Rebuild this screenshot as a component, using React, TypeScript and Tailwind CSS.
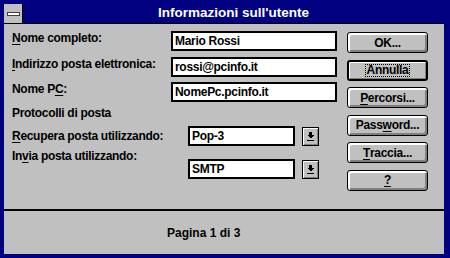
import clsx from 'clsx'
import type { ReactNode } from 'react'

// Mnemonic letter (underlined access key)
const Mn = ({ children }: { children: ReactNode }) => (
  <span className="underline decoration-1 underline-offset-[2px]">{children}</span>
)

const Label = ({ children, className }: { children: ReactNode; className?: string }) => (
  <div className={clsx('shrink-0 text-[12px] leading-[14px] tracking-[-0.3px]', className)}>{children}</div>
)

const TextBox = ({ children, className }: { children: ReactNode; className?: string }) => (
  <div
    className={clsx(
      'flex h-[20px] items-center border-2 border-black bg-white pl-[2px] text-[12px] leading-[14px] tracking-[-0.3px]',
      className
    )}
  >
    {children}
  </div>
)

const DropArrow = () => (
  <div className="ml-[7px] flex h-[19px] w-[17px] items-center justify-center border border-black bg-[#c0c0c0] shadow-[inset_1px_1px_0_#ffffff,inset_-1px_-1px_0_#808080]">
    <svg width="7" height="9" viewBox="0 0 7 9" shapeRendering="crispEdges">
      <rect x="2" y="0" width="3" height="3" fill="#000" />
      <path d="M0 3H7L3.5 6.5Z" fill="#000" />
      <rect x="0" y="8" width="7" height="1" fill="#000" />
    </svg>
  </div>
)

const Button = ({ children, isDefault = false }: { children: ReactNode; isDefault?: boolean }) => (
  <div
    className={clsx(
      'flex h-[21px] items-center justify-center rounded-[3px] bg-[#c0c0c0] text-[12px] leading-[14px] tracking-[-0.3px]',
      isDefault
        ? 'border-2 border-black shadow-[inset_1px_1px_0_#ffffff,inset_-1px_-1px_0_#808080]'
        : 'border border-black shadow-[inset_2px_2px_0_#ffffff,inset_-2px_-2px_0_#808080]'
    )}
  >
    {children}
  </div>
)

export default function App() {
  return (
    <div className="h-[258px] w-[450px] bg-[#000080] pb-[4px] pl-[4px] pr-[6px] pt-[4px] font-['Liberation_Sans',Arial,sans-serif] font-bold text-black">
      <div className="flex h-full flex-col bg-[#c0c0c0]">
        {/* Title bar */}
        <div className="flex h-[20px] shrink-0 border-b border-black bg-[#000080]">
          <div className="flex w-[19px] items-center justify-center border-r border-black bg-[#c0c0c0]">
            <div className="h-[4px] w-[13px] border border-[#404040] bg-white" />
          </div>
          <div className="flex flex-1 items-center justify-center text-[13.5px] text-white">
            Informazioni sull'utente
          </div>
        </div>

        {/* Body */}
        <div className="flex flex-1 pl-[8px]">
          <div className="flex w-[325px] flex-col pt-[7px]">
            <div className="flex h-[20px]">
              <Label className="w-[159px]">
                <Mn>N</Mn>ome completo:
              </Label>
              <TextBox className="w-[166px]">Mario Rossi</TextBox>
            </div>
            <div className="mt-[5.5px] flex h-[20px]">
              <Label className="w-[159px]">
                <Mn>I</Mn>ndirizzo posta elettronica:
              </Label>
              <TextBox className="w-[166px]">rossi@pcinfo.it</TextBox>
            </div>
            <div className="mt-[5.5px] flex h-[20px]">
              <Label className="w-[159px]">
                Nome P<Mn>C</Mn>:
              </Label>
              <TextBox className="w-[166px]">NomePc.pcinfo.it</TextBox>
            </div>

            <Label className="mt-[3.5px]">Protocolli di posta</Label>

            <div className="mt-[6.5px] flex h-[20px] items-center">
              <Label className="w-[176px]">
                <Mn>R</Mn>ecupera posta utilizzando:
              </Label>
              <TextBox className="w-[107px]">Pop-3</TextBox>
              <DropArrow />
            </div>
            <div className="flex items-start">
              <Label className="mt-[2.5px] w-[176px]">
                In<Mn>v</Mn>ia posta utilizzando:
              </Label>
              <div className="mt-[13px] flex items-center">
                <TextBox className="w-[107px]">SMTP</TextBox>
                <DropArrow />
              </div>
            </div>
          </div>

          <div className="ml-[10px] flex w-[81px] flex-col gap-[6.6px] pt-[8px]">
            <Button>OK...</Button>
            <Button isDefault>
              <span className="border border-dotted border-black px-[1px] leading-[11px]">Annulla</span>
            </Button>
            <Button>
              <Mn>P</Mn>ercorsi...
            </Button>
            <Button>
              Pass<Mn>w</Mn>ord...
            </Button>
            <Button>
              <Mn>T</Mn>raccia...
            </Button>
            <Button>
              <Mn>?</Mn>
            </Button>
          </div>
        </div>

        {/* Separator + status */}
        <div className="h-[2px] shrink-0 bg-black" />
        <div className="flex h-[43px] shrink-0 items-center pl-[163px] text-[12px]">Pagina 1 di 3</div>
      </div>
    </div>
  )
}
